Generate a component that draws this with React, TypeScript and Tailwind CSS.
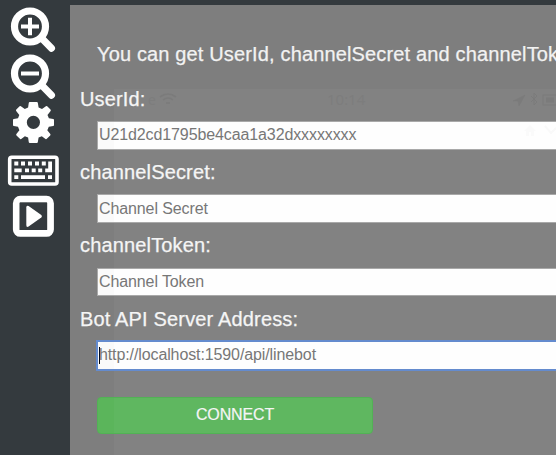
import type { ReactNode } from "react";

const fields = [
  { label: "UserId:", placeholder: "U21d2cd1795be4caa1a32dxxxxxxxx" },
  { label: "channelSecret:", placeholder: "Channel Secret" },
  { label: "channelToken:", placeholder: "Channel Token", raised: true },
  { label: "Bot API Server Address:", placeholder: "http://localhost:1590/api/linebot", focused: true },
];

function Magnifier({ children }: { children: ReactNode }) {
  return (
    <svg className="h-[47px] w-[70px]" viewBox="0 0 70 47" fill="none" stroke="white">
      <circle cx="30" cy="21.5" r="15.5" strokeWidth="7.2" />
      <path d="M41.5 33L51.5 43.3" strokeWidth="7" strokeLinecap="round" />
      <g strokeWidth="4" strokeLinecap="square">{children}</g>
    </svg>
  );
}

function Gear() {
  return (
    <svg className="h-[48px] w-[70px]" viewBox="0 0 70 48" fill="white">
      <path
        fillRule="evenodd"
        d="M28.8 2.8Q28.9 2 29.8 2H36.8Q37.7 2 37.8 2.8L38.6 7.6L42 9.1L45.9 6.2Q46.6 5.7 47.2 6.3L50.5 9.6Q51.1 10.2 50.6 10.9L47.5 14.9L48.9 18.2L53.2 18.9Q54 19 54 19.9V25.1Q54 25.9 53.2 26L48.8 26.7L47.3 30.2L50.3 34.1Q50.8 34.8 50.2 35.4L46.8 38.8Q46.2 39.4 45.5 38.9L41.8 36.2L38.6 37.6L37.8 42.2Q37.7 43 36.8 43H29.8Q28.9 43 28.8 42.2L28.1 37.6L24.9 36.2L21.2 38.9Q20.5 39.4 19.9 38.8L16.5 35.4Q15.9 34.8 16.4 34.1L19.4 30.2L18 26.7L13.8 26Q13 25.9 13 25.1V19.9Q13 19 13.8 18.9L18 18.2L19.3 14.9L16.2 10.9Q15.7 10.2 16.3 9.6L19.6 6.3Q20.2 5.7 20.9 6.2L24.8 9.1L28.1 7.6ZM33.4 15.7A6.6 6.6 0 1 0 33.4 28.9A6.6 6.6 0 1 0 33.4 15.7Z"
      />
    </svg>
  );
}

function Keyboard() {
  return (
    <svg className="h-[44px] w-[70px]" viewBox="0 0 70 44" fill="white">
      <rect x="9.7" y="8.2" width="47.3" height="26.8" rx="2" fill="none" stroke="white" strokeWidth="3.6" />
      <path d="M14.3 12.6h4v4h-4zM21 12.6h4v4h-4zM28 12.6h4v4h-4zM35 12.6h4v4h-4zM41.8 12.6h4v4h-4zM14.3 19.5h7.4v3.7h-7.4zM25 19.5h4v3.7h-4zM31.7 19.5h4v3.7h-4zM38.2 19.5h4v3.7h-4zM48.2 12.6H52v10.6h-6.8V19.5h3zM14.3 26.3h4v3.7h-4zM21 26.3h24v3.7H21zM48 26.3h4v3.7h-4z" />
    </svg>
  );
}

function Play() {
  return (
    <svg className="h-[46px] w-[70px]" viewBox="0 0 70 46" fill="white">
      <rect x="16.3" y="6.2" width="34.2" height="34.2" rx="4" fill="none" stroke="white" strokeWidth="6.8" />
      <rect x="19.7" y="9.6" width="27.4" height="27.4" fill="#343a3e" />
      <path d="M26.3 14.6Q26.3 11.9 28.6 13.1L41.3 22Q42.6 23.3 41.3 24.6L28.6 33.6Q26.3 34.9 26.3 32.1Z" />
    </svg>
  );
}

// Dimmed phone screen that shows faintly beneath the connection form.
function PhoneScreen() {
  return (
    <div className="absolute top-[84px] right-0 bottom-0 left-[44px] overflow-hidden bg-[#828282]">
      <svg className="h-[60px] w-full" viewBox="0 0 442 60" fill="none" stroke="#7b7b7b" strokeWidth="1.6">
        <path d="M46 8Q54 2 62 8M49 11Q54 7 59 11M52 14H56" />
        <path d="M399 12L411 6L405 17L404 12Z" fill="#7b7b7b" strokeWidth="0.5" />
        <path d="M417 7L423 13L420 16V4L423 7L417 13" strokeWidth="1" />
        <rect x="429" y="6" width="18" height="10" strokeWidth="1" />
        <rect x="432" y="8.5" width="8" height="5" fill="#7b7b7b" stroke="none" />
        <text x="34" y="16" fill="#7d7d7d" stroke="none" fontSize="14" fontFamily="Open Sans, sans-serif">e</text>
        <text x="213" y="16" fill="#7d7d7d" stroke="none" fontSize="15" fontFamily="Open Sans, sans-serif">10:14</text>
      </svg>
    </div>
  );
}

// The phone header's icons, barely visible through the first input.
function HeaderGhost() {
  return (
    <svg className="absolute top-[116px] left-[452px] h-[20px] w-[34px]" viewBox="0 0 34 20" fill="none">
      <path d="M2 10L8 4L14 10H12V15H9V11H7V15H4V10Z" fill="#fafafa" />
      <path d="M23 5L29 12L34 7" stroke="#f9f9f9" strokeWidth="2" />
    </svg>
  );
}

export default function App() {
  return (
    <div className="flex h-[455px] w-[556px] overflow-hidden bg-[#343a3e] font-['Liberation_Sans',Arial,sans-serif]">
      <nav className="flex w-[70px] shrink-0 flex-col pt-[5px]">
        <Magnifier><path d="M23 21.5H37M30 14.7V28.3" /></Magnifier>
        <Magnifier><path d="M23 21.5H37" /></Magnifier>
        <div className="-mt-px h-[50px] pt-[2px]"><Gear /></div>
        <div className="pt-px"><Keyboard /></div>
        <Play />
      </nav>
      <main className="relative mt-[5px] min-w-0 flex-1 bg-[#7e7e7e]">
        <PhoneScreen />
        <div className="relative">
          <p className="h-[82px] pt-[37px] pl-[27px] text-[20px] leading-6 tracking-[0.15px] whitespace-nowrap text-[#f2f2f2] [-webkit-text-stroke:0.25px_#f2f2f2]">
            You can get UserId, channelSecret and channelTok
          </p>
          {fields.map((field) => (
            <div key={field.label} className="h-[73.33px] pl-[10px]">
              <label className={`block h-[34px] text-[20px] tracking-[0.16px] whitespace-nowrap text-[#f5f5f5] [-webkit-text-stroke:0.25px_#f5f5f5] ${field.raised ? "leading-[23px]" : "leading-6"}`}>{field.label}</label>
              <div
                className={`ml-[17px] flex h-[28.67px] w-[480px] items-center border bg-[linear-gradient(to_right,#fafafa_16px,#fefefe_16px)] pl-px text-[16px] tracking-[-0.11px] whitespace-nowrap text-[#777] ${
                  field.focused ? "border-[#648bce] ring-1 ring-[#648bce]" : "border-[#a9a9a9]"
                }`}
              >
                {field.focused && <span className="-mr-px h-[17px] w-px bg-black" />}
                {field.placeholder}
              </div>
            </div>
          ))}
          <button className="mt-[17px] ml-[27px] block h-[37px] w-[276px] rounded border border-[#52b255] bg-[linear-gradient(to_right,#5bb55b_16px,#5fb760_16px)] pb-[2px] text-[16px] tracking-[-0.15px] text-[#f5f5f5] [-webkit-text-stroke:0.2px_#f5f5f5]">
            CONNECT
          </button>
          <HeaderGhost />
        </div>
      </main>
    </div>
  );
}
